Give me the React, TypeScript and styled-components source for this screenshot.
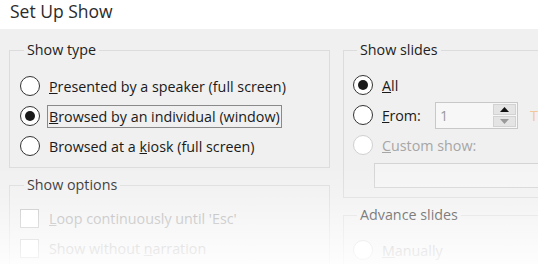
import React from "react";
import styled, { createGlobalStyle } from "styled-components";

const GlobalStyle = createGlobalStyle`
  html, body {
    margin: 0;
    padding: 0;
    background: #ffffff;
  }
  body {
    font-family: "Open Sans", "Noto Sans", sans-serif;
  }
`;

const Window = styled.div`
  position: relative;
  width: 538px;
  height: 264px;
  overflow: hidden;
  background: #f0f0f0;
  color: #1a1a1a;
`;

const TitleBar = styled.div`
  height: 29px;
  background: #ffffff;
  padding-left: 10px;
  font-size: 17.5px;
  line-height: 23px;
  color: #2b2b2b;
`;

const Body = styled.div`
  display: grid;
  grid-template-columns: 321px 1fr;
  column-gap: 13px;
  padding: 11px 0 0 9px;
`;

const Column = styled.div`
  display: flex;
  flex-direction: column;
  gap: 7px;
`;

const Group = styled.fieldset<{ $padTop?: number; $padLeft?: number; $padBottom?: number }>`
  margin: 0;
  min-width: 0;
  border: 1px solid #dcdcdc;
  padding: ${(p) => p.$padTop ?? 10}px 0 ${(p) => p.$padBottom ?? 6}px ${(p) => p.$padLeft ?? 10}px;
`;

const Legend = styled.legend`
  margin-left: 4px;
  padding: 0 3px;
  font-size: 14.3px;
  line-height: 20px;
  color: #222222;
`;

const Row = styled.div<{ $disabled?: boolean }>`
  display: flex;
  align-items: center;
  height: 30px;
  font-size: 14.3px;
  white-space: nowrap;
  color: ${(p) => (p.$disabled ? "#a6a6a6" : "#1a1a1a")};
`;

const Radio = styled.span<{ $checked?: boolean; $disabled?: boolean }>`
  flex: none;
  box-sizing: border-box;
  width: 20px;
  height: 20px;
  border-radius: 50%;
  border: 1px solid ${(p) => (p.$disabled ? "#d0d0d0" : "#333333")};
  background: #ffffff;
  display: flex;
  align-items: center;
  justify-content: center;
  margin-right: 9px;
  &::after {
    content: "";
    display: ${(p) => (p.$checked ? "block" : "none")};
    width: 10px;
    height: 10px;
    border-radius: 50%;
    background: #1a1a1a;
  }
`;

const Checkbox = styled.span`
  flex: none;
  box-sizing: border-box;
  width: 19px;
  height: 19px;
  border: 1px solid #bdbdbd;
  background: #ffffff;
  margin-right: 10px;
`;

const Label = styled.span<{ $focused?: boolean; $width?: number }>`
  display: inline-block;
  padding: 1px 1px;
  margin-left: -2px;
  border: 1px solid ${(p) => (p.$focused ? "#8a8a8a" : "transparent")};
  ${(p) => (p.$width ? `width: ${p.$width}px;` : "")}
`;

const SpinBox = styled.div`
  flex: none;
  box-sizing: border-box;
  width: 83px;
  height: 27px;
  border: 1px solid #c8c8c8;
  background: #f7f7f7;
  display: flex;
`;

const SpinValue = styled.span`
  flex: 1;
  padding-left: 4px;
  font-size: 14.3px;
  line-height: 25px;
  color: #9a9a9a;
`;

const SpinButtons = styled.div`
  width: 23px;
  margin: 1px 1px 1px 0;
  display: flex;
  flex-direction: column;
  gap: 1px;
`;

const SpinButton = styled.div<{ $down?: boolean }>`
  flex: 1;
  background: #e4e4e4;
  border: 1px solid #d2d2d2;
  display: flex;
  align-items: center;
  justify-content: center;
  color: ${(p) => (p.$down ? "#9a9a9a" : "#111111")};
`;

const ToLabel = styled.span`
  margin-left: 12px;
  color: #f2c79a;
  font-size: 14.3px;
`;

const ComboBox = styled.div`
  box-sizing: border-box;
  margin: 3px 0 0 21px;
  width: 200px;
  height: 25px;
  border: 1px solid #d4d4d4;
  background: #f4f4f4;
`;

const Fade = styled.div`
  position: absolute;
  left: 0;
  right: 0;
  top: 165px;
  bottom: 0;
  pointer-events: none;
  background: linear-gradient(
    to bottom,
    rgba(255, 255, 255, 0) 0%,
    rgba(255, 255, 255, 0.25) 35%,
    rgba(255, 255, 255, 0.6) 70%,
    rgba(255, 255, 255, 0.88) 100%
  );
`;

function Arrow({ down }: { down?: boolean }) {
  return (
    <svg width="9" height="5" viewBox="0 0 9 5">
      {down ? <path d="M0 0h9L4.5 5z" fill="currentColor" /> : <path d="M0 5h9L4.5 0z" fill="currentColor" />}
    </svg>
  );
}

export default function App() {
  return (
    <>
      <GlobalStyle />
      <Window>
        <TitleBar>Set Up Show</TitleBar>
        <Body>
          <Column>
            <Group $padTop={11} $padBottom={6}>
              <Legend>Show type</Legend>
              <Row>
                <Radio />
                <Label>
                  <u>P</u>resented by a speaker (full screen)
                </Label>
              </Row>
              <Row>
                <Radio $checked />
                <Label $focused>
                  <u>B</u>rowsed by an individual (window)
                </Label>
              </Row>
              <Row>
                <Radio />
                <Label>
                  Browsed at a <u>k</u>iosk (full screen)
                </Label>
              </Row>
            </Group>
            <Group $padTop={8} $padBottom={20}>
              <Legend>Show options</Legend>
              <Row $disabled>
                <Checkbox />
                <Label>
                  <u>L</u>oop continuously until 'Esc'
                </Label>
              </Row>
              <Row $disabled>
                <Checkbox />
                <Label>
                  Show without <u>n</u>arration
                </Label>
              </Row>
            </Group>
          </Column>
          <Column>
            <Group $padTop={10} $padLeft={9} $padBottom={9}>
              <Legend>Show slides</Legend>
              <Row>
                <Radio $checked />
                <Label>
                  <u>A</u>ll
                </Label>
              </Row>
              <Row>
                <Radio />
                <Label $width={51}>
                  <u>F</u>rom:
                </Label>
                <SpinBox>
                  <SpinValue>1</SpinValue>
                  <SpinButtons>
                    <SpinButton>
                      <Arrow />
                    </SpinButton>
                    <SpinButton $down>
                      <Arrow down />
                    </SpinButton>
                  </SpinButtons>
                </SpinBox>
                <ToLabel>To:</ToLabel>
              </Row>
              <Row $disabled>
                <Radio $disabled />
                <Label>
                  <u>C</u>ustom show:
                </Label>
              </Row>
              <ComboBox />
            </Group>
            <Group $padTop={10} $padLeft={9} $padBottom={20}>
              <Legend>Advance slides</Legend>
              <Row $disabled>
                <Radio $disabled />
                <Label>
                  <u>M</u>anually
                </Label>
              </Row>
            </Group>
          </Column>
        </Body>
        <Fade />
      </Window>
    </>
  );
}
